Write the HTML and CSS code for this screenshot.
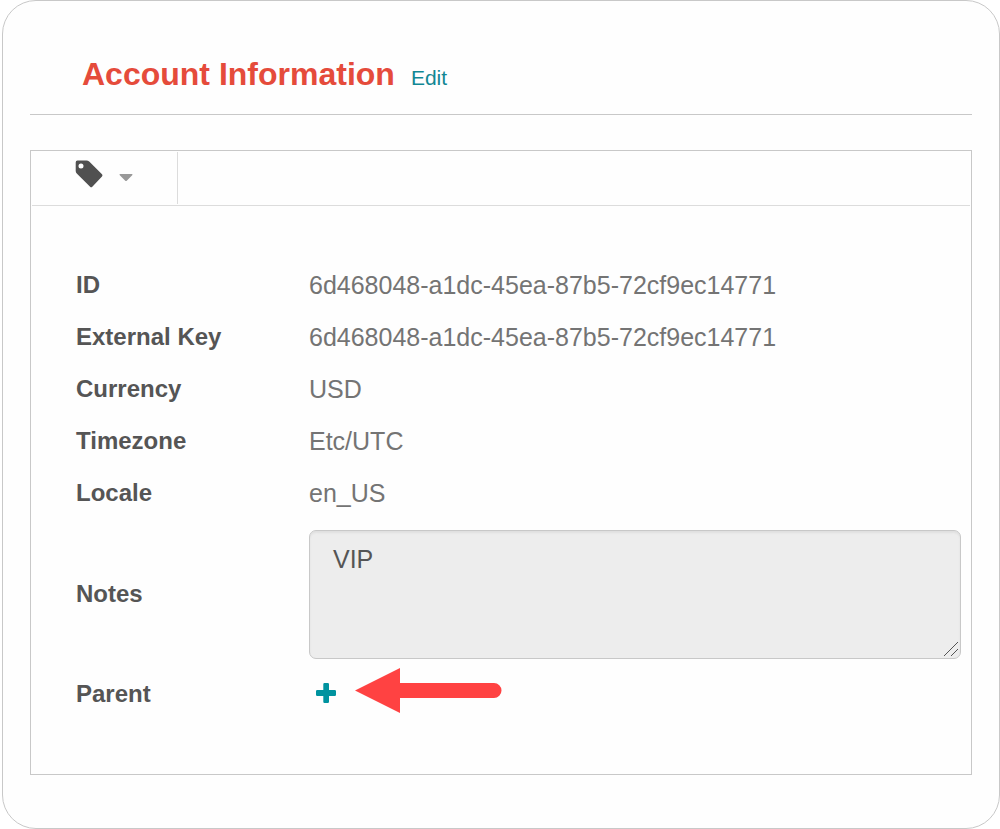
FILE: index.html
```html
<!DOCTYPE html>
<html lang="en">
<head>
<meta charset="utf-8">
<title>Account Information</title>
<link rel="stylesheet" href="styles.css">
</head>
<body>
<main class="card">
  <header class="card-header">
    <h1 class="title">Account Information</h1>
    <a class="edit-link" href="#edit">Edit</a>
  </header>
  <section class="panel">
    <div class="toolbar">
      <button class="tag-button" type="button" aria-label="Tags">
        <svg class="tag-icon" viewBox="0 0 28 28" aria-hidden="true"><path fill-rule="evenodd" d="M2.5 0.5H11.5Q13 0.5 14.2 1.6L27 14.3Q28 15.4 27 16.5L17.3 26.7Q16.2 27.7 15.1 26.7L2 13.8Q0.7 12.5 0.7 11V2.5Q0.7 0.5 2.5 0.5ZM6 3.4A2.5 2.5 0 1 0 6 8.4A2.5 2.5 0 1 0 6 3.4Z"/></svg>
        <svg class="caret-icon" viewBox="0 0 14 8" aria-hidden="true"><path d="M1 0H13Q14 .3 13.2 1.2L8 6.5Q7 7.6 6 6.5L.8 1.2Q0 .3 1 0Z"/></svg>
      </button>
    </div>
    <dl class="details">
      <dt>ID</dt><dd>6d468048-a1dc-45ea-87b5-72cf9ec14771</dd>
      <dt>External Key</dt><dd>6d468048-a1dc-45ea-87b5-72cf9ec14771</dd>
      <dt>Currency</dt><dd>USD</dd>
      <dt>Timezone</dt><dd>Etc/UTC</dd>
      <dt>Locale</dt><dd>en_US</dd>
      <dt><label for="notes">Notes</label></dt>
      <dd class="notes-cell">
        <div class="notes-box">
          <textarea class="notes" id="notes" readonly>VIP</textarea>
          <svg class="grip" viewBox="0 0 14 14" aria-hidden="true"><path d="M0 14L14 0M7 14L14 7"/></svg>
        </div>
      </dd>
      <dt>Parent</dt>
      <dd class="parent-cell">
        <button class="add-button" type="button" aria-label="Add parent">
          <svg class="plus-icon" viewBox="0 0 20 20" aria-hidden="true"><path d="M8.5 0H11.8Q13 0 13 1.2V7H18.8Q20 7 20 8.2V11.8Q20 13 18.8 13H13V18.8Q13 20 11.8 20H8.5Q7.3 20 7.3 18.8V13H1.2Q0 13 0 11.8V8.2Q0 7 1.2 7H7.3V1.2Q7.3 0 8.5 0Z"/></svg>
        </button>
        <svg class="arrow" viewBox="0 0 147 45" aria-hidden="true"><path d="M0 22.5L45 0V15H139A7.5 7.5 0 0 1 139 30H45V45Z"/></svg>
      </dd>
    </dl>
  </section>
</main>
</body>
</html>
```
FILE: styles.css
```css
* {
  box-sizing: border-box;
}

body {
  margin: 0;
  background: #fff;
  font-family: "Liberation Sans", Arial, sans-serif;
  font-size: 25px;
  color: #747474;
}

.card {
  margin-left: 2px;
  padding: 0 27px 53px;
  border: 1px solid #c8c8c8;
  border-radius: 34px;
  background: #fefefe;
}

.card-header {
  display: flex;
  align-items: baseline;
  gap: 16px;
  padding: 53px 52px 20px;
  border-bottom: 1px solid #c8c8c8;
}

.title {
  margin: 0;
  font-size: 32px;
  line-height: 40px;
  color: #e54b3b;
}

.edit-link {
  font-size: 21px;
  line-height: 24px;
  color: #118794;
  text-decoration: none;
}

.panel {
  margin-top: 35px;
  border: 1px solid #c8c8c8;
}

.toolbar {
  display: flex;
  margin: 0 1px;
  padding: 1px 0;
  border-bottom: 1px solid #dcdcdc;
}

.tag-button {
  display: flex;
  align-items: center;
  gap: 16px;
  width: 146px;
  height: 52px;
  padding: 0 0 8px 43px;
  border: 0;
  border-right: 1px solid #dcdcdc;
  background: none;
}

.tag-icon {
  width: 28px;
  height: 28px;
  fill: #505050;
}

.caret-icon {
  width: 14px;
  height: 8px;
  margin-top: 8px;
  fill: #999;
}

.details {
  display: grid;
  grid-template-columns: 233px 1fr;
  align-items: center;
  margin: 0;
  padding: 53px 10px 54px 45px;
  line-height: 52px;
}

.details dt {
  font-size: 24px;
  font-weight: bold;
  color: #555;
}

.details dd {
  margin: 0;
}

.details .notes-cell {
  padding: 11px 0 9px;
}

.notes-box {
  position: relative;
}

.notes {
  display: block;
  width: 100%;
  height: 129px;
  padding: 10px 23px;
  border: 1px solid #c8c8c8;
  border-radius: 7px;
  background: #ededed;
  box-shadow: inset 0 2px 2px #e0e0e0;
  font: inherit;
  line-height: 36px;
  color: #555;
  resize: vertical;
}

.notes::-webkit-resizer {
  display: none;
}

.grip {
  position: absolute;
  right: 3px;
  bottom: 3px;
  width: 14px;
  height: 14px;
  fill: none;
  stroke: #555;
  pointer-events: none;
}

.details .parent-cell {
  display: flex;
  align-items: center;
  gap: 19px;
  height: 52px;
  padding-left: 7px;
}

.add-button {
  display: flex;
  padding: 0 0 2px;
  border: 0;
  background: none;
}

.plus-icon {
  width: 20px;
  height: 20px;
  fill: #00939f;
}

.arrow {
  width: 147px;
  height: 45px;
  margin-bottom: 7px;
  fill: #ff4242;
}
```
